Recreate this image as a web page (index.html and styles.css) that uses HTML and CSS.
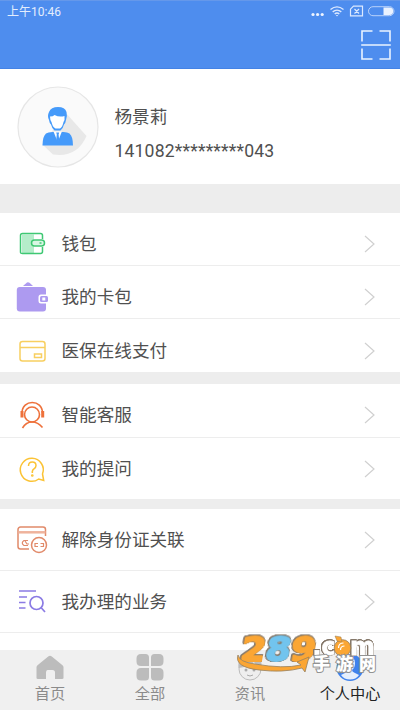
FILE: index.html
```html
<!DOCTYPE html>
<html lang="zh-CN">
<head>
<meta charset="utf-8">
<title>个人中心</title>
<link rel="stylesheet" href="styles.css">
</head>
<body>
<div class="app">
  <header class="header">
    <div class="status">
      <span class="time">上午10:46</span>
      <svg class="status-icons" width="86" height="14" viewBox="0 0 86 14" fill="none" stroke="#dce9ff">
        <g fill="#eef4ff" stroke="none"><circle cx="3" cy="9.500" r="1.600"/><circle cx="7.600" cy="9.500" r="1.600"/><circle cx="12.200" cy="9.500" r="1.600"/></g>
        <g stroke-width="1.400"><path d="M20.500 4.500Q27 -.8 33.500 4.500M22.700 6.900Q27 3.300 31.300 6.900M24.700 9Q27 7 29.300 9"/></g>
        <path d="M25.800 9.900h2.400L27 11.500z" fill="#dce9ff" stroke="none"/>
        <path d="M43.500 1.200h9v9.600h-12V4.200zM44.500 4l4.500 4.500m0-4.500l-4.500 4.500" stroke-width="1.200"/>
        <rect x="58.500" y="1.700" width="25.500" height="9" rx="4.500" stroke="#b9d2fb"/>
        <path d="M73.500 2.500h6a3.700 3.700 0 0 1 0 7.400h-6z" fill="#eaf2ff" stroke="none"/>
      </svg>
    </div>
    <svg class="scan" width="30" height="30" viewBox="0 0 30 30" fill="none" stroke="#eaf3ff" stroke-width="1.600"><path d="M11.500 1H1v10.500M18.500 1H29v10.500M1 18.500V29h10.500M29 18.500V29H18.500M.2 15h29.600"/></svg>
  </header>

  <section class="profile">
    <svg class="avatar" width="82" height="82" viewBox="0 0 82 82">
      <circle cx="41" cy="41" r="40" fill="#fafafa" stroke="#e6e6e6" stroke-width="1.200"/>
      <path d="M48 26L69.500 50Q60 72 36 68.500L26 59z" fill="#e8e8e8"/>
      <path d="M32 34q-2-4 0-8 2-5 9-5 7 0 8.500 5 1 4-.5 8-.5 3.500-2 4.500-1 4-3.500 6h-6q-2.500-2-3.500-6-1.500-1-2-4.500z" fill="#459afa"/>
      <path d="M33 30.500q3 0 4.500-1.500 5 2.500 10 1 .5 4-1 6-1 5-3.500 6.500h-4.500q-3-1.500-4-6.500-1.500-2-1.500-5.500z" fill="#fff"/>
      <path d="M25.500 59.500q0-9 3.500-12 2-1.300 6.500-1.500h11q4 0 6 1.500 3.500 3 3.500 12z" fill="#459afa"/>
      <path d="M36.500 45.500L40.700 56l4.200-10.500z" fill="#fff"/>
      <path d="M39.200 46.500h3l-.6 2 .6 5.500-1.500 3-1.500-3 .6-5.500z" fill="#459afa"/>
    </svg>
    <div class="identity"><div class="name">杨景莉</div><div class="number">141082*********043</div></div>
  </section>

  <main>
    <section class="group wallet">
      <div class="row"><svg class="icon" viewBox="0 0 32 32" fill="none" stroke="#3fc873" stroke-width="1.500"><path d="M6 6.500h12v19H6z" fill="#b5edca" stroke="none"/><path d="M26.500 11V7.500a2 2 0 0 0-2-2h-18a2 2 0 0 0-2 2v17q0 1 2 1h18a2 2 0 0 0 2-2V19"/><rect x="15.500" y="12" width="13" height="6" rx="3" fill="#d9f6e4"/><path d="M23.500 15h2"/></svg><span class="label">钱包</span><svg class="arrow" viewBox="0 0 12 18"><path d="M1 1l9 8-9 8"/></svg></div>
      <div class="row"><svg class="icon" viewBox="0 0 32 32"><path d="M7 5l4-3.500q1-.6 2.500.2L17 5z" fill="#ad9af0"/><rect x=".800" y="6" width="29.200" height="24.500" rx="3" fill="#ad9af0"/><path d="M33 13.500h-8q-2.500 0-2.500 2.500v4q0 2.500 2.500 2.500h8z" fill="#fff"/><rect x="24" y="15" width="8" height="6" rx="1.500" fill="#ad9af0"/><rect x="26.300" y="16.500" width="3" height="3" fill="#fff"/></svg><span class="label">我的卡包</span><svg class="arrow" viewBox="0 0 12 18"><path d="M1 1l9 8-9 8"/></svg></div>
      <div class="row"><svg class="icon" viewBox="0 0 32 32" fill="none" stroke="#f8cf60" stroke-width="1.500"><rect x="4" y="6.500" width="25" height="19.500" rx="2.500"/><path d="M4 12.500h25M18.500 19h7v3.500h-7z"/></svg><span class="label">医保在线支付</span><svg class="arrow" viewBox="0 0 12 18"><path d="M1 1l9 8-9 8"/></svg></div>
    </section>
    <section class="group service">
      <div class="row"><svg class="icon" viewBox="0 0 32 32" fill="none" stroke="#ee713b" stroke-width="1.600"><circle cx="16" cy="15.500" r="7.500"/><path d="M6 14C6 0 26.500 0 26.500 14M6.500 29q3.500-6 9.500-6t10.500 5.500"/><path d="M6 12v6.500M26.700 12v6.500" stroke-width="3"/></svg><span class="label">智能客服</span><svg class="arrow" viewBox="0 0 12 18"><path d="M1 1l9 8-9 8"/></svg></div>
      <div class="row"><svg class="icon" viewBox="0 0 32 32" fill="none" stroke="#fbc335" stroke-width="1.500"><path d="M26.500 21l1.200 6.500-5-1.500A11.500 11.500 0 1 1 26.500 21z"/><path d="M12.500 13q0-4 3.800-4 3.700 0 3.700 3.600 0 2-2 3.200-2 1.200-1.700 4.200"/><circle cx="16.300" cy="22.500" r=".6"/></svg><span class="label">我的提问</span><svg class="arrow" viewBox="0 0 12 18"><path d="M1 1l9 8-9 8"/></svg></div>
    </section>
    <section class="group business">
      <div class="row"><svg class="icon" viewBox="0 0 32 32" fill="none" stroke="#e18a6a" stroke-width="1.500"><path d="M13 25H4.500A2.500 2.500 0 0 1 2 22.500v-17A2.500 2.500 0 0 1 4.500 3H27a2.500 2.500 0 0 1 2.500 2.500V12"/><path d="M2.500 8.300h27" stroke="#efb39c" stroke-width="2.500"/><circle cx="23" cy="21" r="7.500"/><path d="M22 19.500h-3v3h3M24.500 19.500h3v3h-3M12 16.500H8q-3.500 2.500 0 5h4M9 17l2 3h2" stroke-width="1.200"/></svg><span class="label">解除身份证关联</span><svg class="arrow" viewBox="0 0 12 18"><path d="M1 1l9 8-9 8"/></svg></div>
      <div class="row"><svg class="icon" viewBox="0 0 32 32" fill="none" stroke="#8b7be4" stroke-width="1.700"><path d="M3 5h17M3 11h8M3 16.500h6.500M3 22h6.500M25 21.500l4 4.500"/><circle cx="20.500" cy="17" r="6.500"/></svg><span class="label">我办理的业务</span><svg class="arrow" viewBox="0 0 12 18"><path d="M1 1l9 8-9 8"/></svg></div>
    </section>
  </main>

  <nav class="tabs">
    <div class="tab"><svg viewBox="0 0 28 28" fill="#bcbcbc"><path d="M12.200 3.500q1.800-1.500 3.600 0l10.700 8.800q1 1 1 2V25q0 1-1.500 1h-7v-6.500q0-2.500-2.500-2.500h-5Q10 17 10 19.500V26H2Q.5 26 .5 25V14.300q0-1 1-2z"/></svg><span>首页</span></div>
    <div class="tab"><svg viewBox="0 0 28 28" fill="#bcbcbc"><path d="M5 1h4.500q3.500 0 3.500 3.500V13H5Q.5 13 .5 8.500v-3Q.5 1 5 1zM18.500 1H23q4.500 0 4.500 4.500v3Q27.500 13 23 13h-8V4.500Q15 1 18.500 1zM5 15h8v9q0 3.500-3.500 3.500H5Q.5 27.500.5 23v-3.500Q.5 15 5 15zM15 15h8q4.500 0 4.500 4.500V23q0 4.500-4.500 4.500h-4.500Q15 27.500 15 24z"/></svg><span>全部</span></div>
    <div class="tab"><svg viewBox="0 0 28 28"><circle cx="14" cy="16" r="11" fill="#eee" stroke="#bcbcbc"/><path d="M2.500 15Q1 2 14 2t11.500 13Q21 14 18 9q-6 5-15.500 6z" fill="#bcbcbc"/><circle cx="10" cy="17" r="1.500" fill="#aaa"/><circle cx="18" cy="17" r="1.500" fill="#aaa"/><path d="M11 22q3 2 6 0" fill="none" stroke="#aaa"/></svg><span>资讯</span></div>
    <div class="tab active"><svg viewBox="0 0 28 28"><circle cx="14" cy="14.500" r="13.500" fill="#3f82ec"/><path d="M9 10q0-6 5-6t5 6q0 5-3 7 0 2 3 3l4 2q-3 4.500-9 4.500T5 22l4-2q3-1 3-3-3-2-3-7z" fill="#e5effd"/></svg><span>个人中心</span></div>
  </nav>

  <svg class="watermark" width="146" height="58" viewBox="0 0 146 58">
    <g class="digits"><text class="orange" transform="translate(4 39) skewX(-10)" textLength="25" lengthAdjust="spacingAndGlyphs">2</text><text class="blue" transform="translate(29 39) skewX(-10)" textLength="25" lengthAdjust="spacingAndGlyphs">8</text><text class="orange" transform="translate(54 39) skewX(-10)" textLength="25" lengthAdjust="spacingAndGlyphs">9</text></g>
    <path d="M3 33Q4 40 20 42Q48 47 66 43L62 40L74 35L70 50L67 46Q48 51 24 48Q-1 45 3 33z" fill="#fba634" stroke="#968060" stroke-width=".800"/>
    <g class="domain"><text x="77.500" y="33" textLength="23" lengthAdjust="spacingAndGlyphs">.c</text><text x="115" y="33" textLength="25" lengthAdjust="spacingAndGlyphs">m</text></g>
    <circle cx="107.500" cy="26" r="8.300" fill="#fba634" stroke="#937a56" stroke-width=".800"/><path d="M100 14l6 1 1 5-5-1z" fill="#fba634" stroke="#937a56" stroke-width=".500"/><path d="M103.500 26q0-5 5-5M105.500 28q0-4 4-4" fill="none" stroke="#fff" stroke-width="1.200"/>
    <text class="site" x="78" y="48" textLength="63" lengthAdjust="spacing">手游网</text>
  </svg>
</div>
</body>
</html>
```
FILE: styles.css
```css
* { box-sizing: border-box; }
body { margin: 0; background: #fff; color: #505050; font-family: Roboto, "Noto Sans CJK SC", sans-serif; }
svg { display: block; flex-shrink: 0; }
.app { position: relative; display: flex; flex-direction: column; width: 400px; height: 711px; overflow: hidden; }
.header { height: 69px; background: #4e8dee; border-top: 1px solid #6598ea; border-bottom: 1px solid #4382e5; }
.status { display: flex; justify-content: space-between; height: 29px; padding: 4px 4px 0 7px; }
.time { font-size: 12px; line-height: 14px; color: #e3edfd; letter-spacing: 0; }
.scan { margin-left: 361px; }
.profile { display: flex; height: 115px; padding: 17px 0 0 17px; }
.identity { padding: 18px 0 0 15.500px; font-size: 17.600px; }
.name { line-height: 26px; }
.number { margin-top: 9px; line-height: 25px; letter-spacing: .15px; }
main { height: 466px; padding-top: 29px; background: #ededed; }
.group { background: #fff; }
.row { display: flex; align-items: center; border-bottom: 1px solid #ededed; padding-right: 24px; }
.row:last-child { border-bottom: 0; }
.icon { width: 32px; height: 32px; margin-left: 16px; overflow: visible; }
.label { flex: 1; margin-left: 13.500px; font-size: 17.600px; line-height: 26px; }
.arrow { width: 12px; height: 18px; fill: none; stroke: #d0d0d0; stroke-width: 1.200; }
.wallet { height: 159px; margin-bottom: 12px; }
.wallet .row { height: 53px; padding-top: 10px; }
.service { height: 115px; margin-bottom: 10px; }
.service .row { height: 54px; padding-top: 9px; }
.service .row:last-child { height: 61px; padding-top: 0; }
.business { height: 141px; }
.business .row { height: 62px; }
.business .row:last-child { border-bottom: 1px solid #ededed; }
.tabs { display: grid; grid-template-columns: repeat(4, 1fr); height: 60px; background: #f0f0f0; }
.tab { display: flex; flex-direction: column; align-items: center; padding-top: 3px; font-size: 15.200px; line-height: 22px; color: #8b8b8b; }
.tab svg { width: 28px; height: 28px; }
.tab span { margin-top: 2px; }
.active { color: #222; }
.watermark { position: absolute; left: 235px; top: 622px; overflow: visible; }
.digits { font: bold 33px "DejaVu Sans", sans-serif; stroke-width: 2; stroke-linejoin: round; }
.digits text, .domain text { filter: drop-shadow(.6px 0 0 #85786a) drop-shadow(-.6px 0 0 #85786a) drop-shadow(0 .6px 0 #85786a) drop-shadow(0 -.6px 0 #85786a); }
.orange { fill: #fba634; stroke: #fba634; }
.blue { fill: #72c4ee; stroke: #72c4ee; }
.domain { font: bold 24px "DejaVu Sans", sans-serif; fill: #fff; stroke: #fff; stroke-width: .8; }
.site { font: 900 17px "Noto Sans CJK SC", sans-serif; fill: #fff; stroke: #929292; stroke-width: 2; paint-order: stroke; }
```
